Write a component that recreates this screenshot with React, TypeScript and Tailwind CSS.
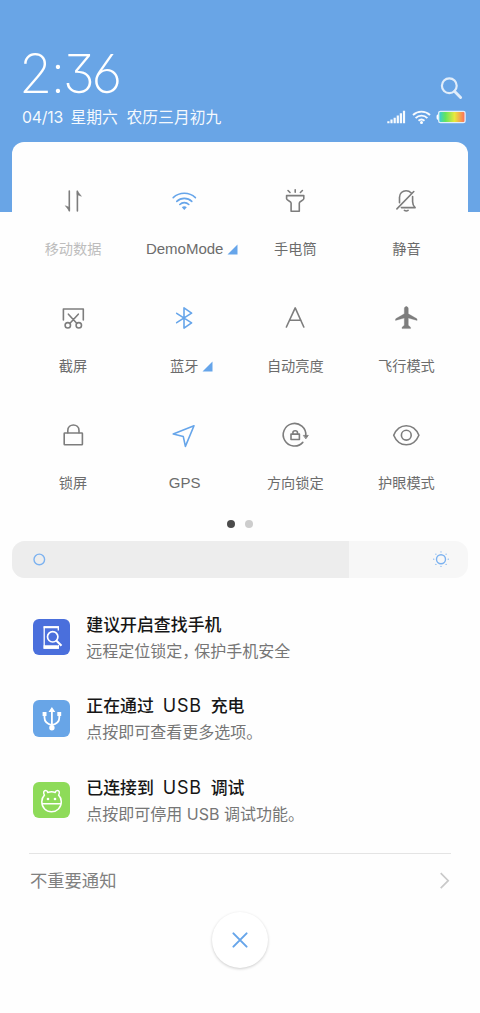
import type { ReactNode } from 'react';

const GRAY = '#7d7d7d';
const BLUE = '#66a5ea';

function Glyph({ color = GRAY, children }: { color?: string; children: ReactNode }) {
  return (
    <svg width="30" height="30" viewBox="0 0 30 30" fill="none" stroke={color} strokeWidth="1.6" strokeLinecap="round" strokeLinejoin="round">
      {children}
    </svg>
  );
}

type Tile = { label: string; icon: ReactNode; muted?: boolean; more?: boolean };

const tiles: Tile[] = [
  {
    label: '移动数据',
    muted: true,
    icon: (
      <Glyph>
        <path d="M11.3 5v19.7M19.4 25V5.3" />
        <path d="M11.3 24.9l-4-5.2 4 1.6zM19.4 5.1l4 5.2-4-1.6z" fill={GRAY} strokeWidth=".5" />
      </Glyph>
    ),
  },
  {
    label: 'DemoMode',
    more: true,
    icon: (
      <Glyph color={BLUE}>
        <path d="M4.2 11.7a16.2 16.2 0 0 1 22.2 0M7.8 15.4a10.8 10.8 0 0 1 15 0M10.8 18.5a6.4 6.4 0 0 1 9 0" />
        <path d="M12.8 21.2c1.3-1.3 3.7-1.3 5 0L15.3 24z" fill={BLUE} stroke="none" />
      </Glyph>
    ),
  },
  {
    label: '手电筒',
    icon: (
      <Glyph>
        <path d="M6.6 9.6h17.2v3.2c0 1.6-4.5 2.3-4.5 4.2v8.2h-8.2V17c0-1.9-4.5-2.6-4.5-4.2zM8 4.5l2 2M15.2 3.7v2.6M22.4 4.5l-2 2" />
      </Glyph>
    ),
  },
  {
    label: '静音',
    icon: (
      <Glyph>
        <path d="M5.9 22.9L22.8 5.5M8.5 16.7v-5.4c0-4 3-6.6 6.6-6.6 2 0 3.7.7 4.9 2M21.6 10.6v5.2c0 2.4.9 4.2 2.5 5.8H10.4M13.4 24.4c1 .7 2.7.7 3.7 0" />
      </Glyph>
    ),
  },
  {
    label: '截屏',
    icon: (
      <Glyph>
        <path d="M5.4 17V6h19.9v11M10.4 11.2l8.3 9M20.3 11.2l-8.3 9" />
        <circle cx="9.8" cy="22.3" r="2.7" />
        <circle cx="20.8" cy="22.3" r="2.7" />
      </Glyph>
    ),
  },
  {
    label: '蓝牙',
    more: true,
    icon: (
      <Glyph color={BLUE}>
        <path d="M7.7 10.3L22.6 19.8 15 25.1V4.9l7.6 5.3-14.9 9.5" />
      </Glyph>
    ),
  },
  {
    label: '自动亮度',
    icon: (
      <Glyph>
        <path d="M6.4 24L15.2 4.9 23.8 24M9.4 17.3h11.6" />
      </Glyph>
    ),
  },
  {
    label: '飞行模式',
    icon: (
      <Glyph>
        <path
          d="M15.3 3.6c1.1 0 2 .9 2 2v5.2l8.3 4.8c.5.3.6 1.1.5 1.8l-8.8-2.3v7.2l2 1.6c.3.3.4 1.1.3 1.7h-8.6c-.1-.6 0-1.4.3-1.7l2-1.6v-7.2l-8.8 2.3c-.1-.7 0-1.5.5-1.8l8.3-4.8V5.6c0-1.1.9-2 2-2z"
          fill={GRAY}
          strokeWidth=".3"
        />
      </Glyph>
    ),
  },
  {
    label: '锁屏',
    icon: (
      <Glyph>
        <rect x="6.2" y="13" width="18.2" height="11.8" rx=".6" />
        <path d="M9.8 12.8v-2.4c0-7.3 11.2-7.3 11.2 0v2.4" />
      </Glyph>
    ),
  },
  {
    label: 'GPS',
    icon: (
      <Glyph color={BLUE}>
        <path d="M25 5.8L4.2 14l10.1 2.6 2.1 9.8z" />
      </Glyph>
    ),
  },
  {
    label: '方向锁定',
    icon: (
      <Glyph>
        <path d="M22.8 22.4A11.3 11.3 0 1 1 25.8 15.5" />
        <path d="M23.7 15.4h4.6l-2.3 3.2z" fill={GRAY} strokeWidth=".8" />
        <rect x="11" y="14.1" width="8.4" height="5.4" />
        <path d="M12.9 14v-1.3c0-2.7 4.6-2.7 4.6 0V14" />
      </Glyph>
    ),
  },
  {
    label: '护眼模式',
    icon: (
      <Glyph>
        <path d="M2.7 15.2C8 2.5 22.6 2.5 27.9 15.2 22.6 27.9 8 27.9 2.7 15.2z" />
        <circle cx="15.3" cy="15.2" r="4.9" />
      </Glyph>
    ),
  },
];

function QuickTile({ label, icon, muted, more }: Tile) {
  const latin = /^[A-Za-z]+$/.test(label);
  return (
    <div className="flex h-[117.2px] flex-col items-center">
      {icon}
      <div
        className={`relative mt-[23px] leading-5 whitespace-nowrap ${latin ? "pl-px font-['Liberation_Sans',sans-serif] text-[15px]" : 'text-[14.2px]'} ${muted ? 'text-[#bdbdbd]' : 'text-[#6c6c6c]'}`}
      >
        {label}
        {more && (
          <svg className="absolute top-[5px] left-full ml-[3.5px]" width="11" height="11" viewBox="0 0 11 11">
            <path d="M10.5.5v10H.5z" fill={BLUE} />
          </svg>
        )}
      </div>
    </div>
  );
}

function FindPhoneIcon() {
  return (
    <svg width="37" height="37" viewBox="0 0 37 37" fill="none" stroke="#fff">
      <path d="M25.3 11.5V8H11.2v21h14.1v-3" strokeWidth="1.3" />
      <path d="M10.6 26.3h13.6l1.7 1.4v2H10.6zM10.6 7.3h15.3v2H10.6z" fill="#fff" stroke="none" />
      <circle cx="19.7" cy="17.8" r="5.2" strokeWidth="1.7" />
      <path d="M23.5 21.7l5 5" strokeWidth="2.2" />
    </svg>
  );
}

function UsbIcon() {
  return (
    <svg width="37" height="37" viewBox="0 0 37 37" fill="none" stroke="#fff" strokeWidth="1.8">
      <path d="M18.9 10v17M11.5 15.5v2.3c0 4.2 3.5 6.4 7.4 7.3 3.9-.9 7.4-3.1 7.4-7.3v-2.3" />
      <path d="M18.9 7l3.4 5h-6.8zM9.6 12.1h3.9v4H9.6zM24.3 12.1h3.9v4h-3.9z" fill="#fff" stroke="none" />
      <circle cx="18.9" cy="27.7" r="2.7" fill="#fff" stroke="none" />
    </svg>
  );
}

function DebugIcon() {
  return (
    <svg width="37" height="37" viewBox="0 0 37 37" fill="none" stroke="#fff" strokeWidth="1.5" strokeLinejoin="round">
      <path d="M11.4 13.1c-1.6-2.6-.5-4.6 1.2-4.6 1.4 0 1.9.8 2.2 2 2.3-.8 5.3-.8 7.4 0 .3-1.2.8-2 2.2-2 1.7 0 2.8 2 1.2 4.6 2 1.9 2.7 4 2.7 6.6 0 5.9-4.3 10-9.8 10s-9.7-4.1-9.7-10c0-2.6.7-4.7 2.6-6.6z" />
      <path d="M9 21.7h19" />
      <circle cx="15" cy="17" r="1.3" fill="#fff" stroke="none" />
      <circle cx="22" cy="17" r="1.3" fill="#fff" stroke="none" />
    </svg>
  );
}

type Note = { tone: string; icon: ReactNode; title: ReactNode; body: ReactNode };

const usb = <span className="mr-[9px] ml-[9px] text-[18px] font-normal tracking-[0.7px]">USB</span>;

const notes: Note[] = [
  {
    tone: 'bg-[#4a6fdc]',
    icon: <FindPhoneIcon />,
    title: '建议开启查找手机',
    body: (
      <>
        远程定位锁定<span className="mr-1 [font-feature-settings:'halt']">，</span>保护手机安全
      </>
    ),
  },
  { tone: 'bg-[#68a5e7]', icon: <UsbIcon />, title: <>正在通过{usb}充电</>, body: '点按即可查看更多选项。' },
  { tone: 'bg-[#8edb59]', icon: <DebugIcon />, title: <>已连接到{usb}调试</>, body: '点按即可停用 USB 调试功能。' },
];

function StatusIcons() {
  return (
    <svg width="80" height="14" viewBox="0 0 80 14" fill="none">
      <defs>
        <linearGradient id="charge">
          <stop offset="0" stopColor="#35c9e8" />
          <stop offset=".25" stopColor="#62e55e" />
          <stop offset=".6" stopColor="#e8e83c" />
          <stop offset="1" stopColor="#ff6a5c" />
        </linearGradient>
      </defs>
      <path d="M.3 11.3h2.2v2H.3zM3.4 9.6h2.2v3.7H3.4zM6.6 7.7h2.2v5.6H6.6zM9.7 5.6h2.2v7.7H9.7zM12.8 3.2H15v10.1h-2.2zM15.9.7h2.2v12.6h-2.2z" fill="#fff" fillOpacity=".95" />
      <path d="M26 5a12.4 12.4 0 0 1 17 0M28.6 8.1a8.3 8.3 0 0 1 11.8 0M31.5 10.8a4.6 4.6 0 0 1 6 0" stroke="#fff" strokeOpacity=".95" strokeWidth="1.9" />
      <circle cx="34.5" cy="12.4" r="1.5" fill="#fff" />
      <path d="M51.5 4.5h-1q-1 0-1 2.6t1 2.6h1z" fill="#fff" />
      <rect x="51.7" y="1.3" width="26.4" height="11.4" rx="1.8" fill="url(#charge)" stroke="#e3effb" strokeWidth="1.3" />
    </svg>
  );
}

export default function App() {
  return (
    <main className="h-[1013px] w-[480px] overflow-hidden bg-[#fefefe] font-['Inter','Noto_Sans_CJK_SC',sans-serif]">
      <header className="flex h-[212px] items-start justify-between bg-[#69a5e6] pr-[13px] pl-[22px] text-white">
        <div className="pt-[44px]">
          <h1 className="-ml-[3px] h-[60px] text-[54px] leading-[60px] font-[240] tracking-[-3.3px] [font-feature-settings:'cv03','cv09']">
            2<span className="mx-[1.5px]">:</span><span className="-ml-[1px]">3</span>6
          </h1>
          <p className="mt-[2px] flex text-[15.8px] leading-6 whitespace-nowrap text-white/95">
            <span className="w-[48.5px] tracking-[-0.2px]">04/13</span>
            <span className="w-14">星期六</span>
            <span>农历三月初九</span>
          </p>
        </div>
        <div className="flex flex-col items-end gap-[10px] pt-[76px]">
          <svg className="mr-[3px]" width="24" height="24" viewBox="0 0 24 24" fill="none" stroke="#e1edfa">
            <circle cx="9.3" cy="9.7" r="7.4" strokeWidth="2.2" />
            <path d="M14.7 15.4l5.9 6" strokeWidth="2.9" strokeLinecap="round" />
          </svg>
          <StatusIcons />
        </div>
      </header>

      <section className="-mt-[70px] mr-[12.5px] ml-3 rounded-t-xl bg-[#fefefe] px-[5.5px] pt-11">
        <div className="grid grid-cols-4">
          {tiles.map((tile) => (
            <QuickTile key={tile.label} {...tile} />
          ))}
        </div>
      </section>

      <div className="-mt-[17.6px] flex justify-center gap-[10px]">
        <span className="size-2 rounded-full bg-[#4b4b4b]" />
        <span className="size-2 rounded-full bg-[#cdcdcd]" />
      </div>

      <div className="mt-[13px] mr-[12.5px] ml-3 flex h-[37px] overflow-hidden rounded-[13px] bg-[#f7f7f7]">
        <div className="flex w-[337px] items-center bg-[#ededed] pl-5">
          <svg width="14" height="14" viewBox="0 0 14 14">
            <circle cx="7.3" cy="7.4" r="5.3" fill="none" stroke="#7cb2f0" strokeWidth="1.4" />
          </svg>
        </div>
        <div className="flex flex-1 items-center justify-end pr-[18px]">
          <svg width="18" height="18" viewBox="0 0 18 18" fill="none" stroke="#7cb2f0" strokeLinecap="round">
            <circle cx="9" cy="9.2" r="4.5" strokeWidth="1.4" />
            <path d="M9 1.9v.1M9 16.4v.1M1.7 9.2h.1M16.2 9.2h.1M3.9 4.1v.1M14.1 4.1v.1M3.9 14.3v.1M14.1 14.3v.1" strokeWidth="1.2" />
          </svg>
        </div>
      </div>

      <section className="pt-[34px] pl-[33px]">
        {notes.map((note, i) => (
          <article key={i} className="flex h-[81.4px] gap-[16.8px]">
            <div className={`mt-[7px] size-[36.5px] shrink-0 overflow-hidden rounded-[6px] ${note.tone}`}>{note.icon}</div>
            <div className="whitespace-nowrap">
              <h2 className="h-[26px] text-[16.9px] leading-[26px] font-medium text-[#161616]">{note.title}</h2>
              <p className="h-[26px] text-[16px] leading-[26px] text-[#767676]">{note.body}</p>
            </div>
          </article>
        ))}
      </section>

      <footer className="mx-[29px] -mt-[3px] border-t border-[#e4e4e4]">
        <div className="flex h-[54px] items-center justify-between pl-px text-[17.3px] text-[#808080]">
          <span>不重要通知</span>
          <svg width="12" height="18" viewBox="0 0 12 18" fill="none" stroke="#c9c9c9" strokeWidth="1.7">
            <path d="M1.7 1.2L9.2 8.7l-7.5 7.5" />
          </svg>
        </div>
        <button className="mx-auto mt-[4px] flex size-14 items-center justify-center rounded-full bg-white shadow-[0_1px_3px_rgba(0,0,0,0.2)]">
          <svg width="18" height="18" viewBox="0 0 18 18" stroke="#66a5ea" strokeWidth="2" strokeLinecap="round">
            <path d="M2.4 2.4l13.2 13.2M15.6 2.4L2.4 15.6" />
          </svg>
        </button>
      </footer>
    </main>
  );
}
